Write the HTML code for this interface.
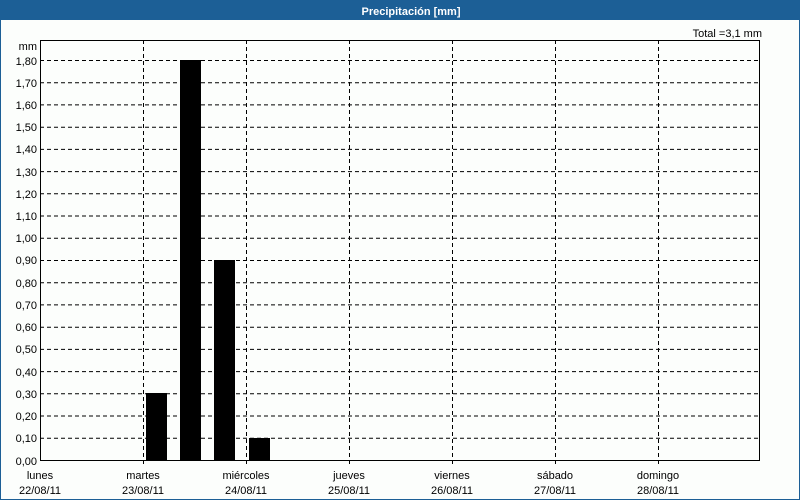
<!DOCTYPE html>
<html><head><meta charset="utf-8"><style>
html,body{margin:0;padding:0;background:#fff;}
svg{display:block;font-family:"Liberation Sans","DejaVu Sans",sans-serif;font-size:11px;}
</style></head><body>
<svg width="800" height="500" xmlns="http://www.w3.org/2000/svg">
<rect x="0" y="0" width="800" height="500" fill="#fcfefc"/>
<rect x="0" y="0" width="800" height="20" fill="#1c5f96"/>
<rect x="0.5" y="0.5" width="799" height="499" fill="none" stroke="#1c5f96"/>
<text x="411" y="15" fill="#fff" font-weight="bold" text-anchor="middle">Precipitación [mm]</text>
<text x="762" y="37" text-anchor="end" fill="#000">Total =3,1 mm</text>
<text x="37" y="50" text-anchor="end">mm</text>
<g stroke="#000" stroke-dasharray="4,3" stroke-width="1">
<line x1="40" x2="760" y1="60.5" y2="60.5"/><line x1="40" x2="760" y1="82.7" y2="82.7"/><line x1="40" x2="760" y1="104.9" y2="104.9"/><line x1="40" x2="760" y1="127.2" y2="127.2"/><line x1="40" x2="760" y1="149.4" y2="149.4"/><line x1="40" x2="760" y1="171.6" y2="171.6"/><line x1="40" x2="760" y1="193.8" y2="193.8"/><line x1="40" x2="760" y1="216" y2="216"/><line x1="40" x2="760" y1="238.3" y2="238.3"/><line x1="40" x2="760" y1="260.5" y2="260.5"/><line x1="40" x2="760" y1="282.7" y2="282.7"/><line x1="40" x2="760" y1="304.9" y2="304.9"/><line x1="40" x2="760" y1="327.2" y2="327.2"/><line x1="40" x2="760" y1="349.4" y2="349.4"/><line x1="40" x2="760" y1="371.6" y2="371.6"/><line x1="40" x2="760" y1="393.8" y2="393.8"/><line x1="40" x2="760" y1="416" y2="416"/><line x1="40" x2="760" y1="438.3" y2="438.3"/>
<line x1="143.5" x2="143.5" y1="40" y2="464"/><line x1="246.5" x2="246.5" y1="40" y2="464"/><line x1="349.5" x2="349.5" y1="40" y2="464"/><line x1="452.5" x2="452.5" y1="40" y2="464"/><line x1="555.5" x2="555.5" y1="40" y2="464"/><line x1="658.5" x2="658.5" y1="40" y2="464"/>
</g>
<g fill="#000">
<rect x="146" y="393" width="21" height="68"/>
<rect x="180" y="60" width="21" height="401"/>
<rect x="214" y="260" width="21" height="201"/>
<rect x="249" y="438" width="21" height="23"/>
</g>
<rect x="40.5" y="40.5" width="719" height="420" fill="none" stroke="#000"/>
<g text-anchor="end" fill="#000">
<text x="37" y="65">1,80</text><text x="37" y="87">1,70</text><text x="37" y="109">1,60</text><text x="37" y="131">1,50</text><text x="37" y="153">1,40</text><text x="37" y="176">1,30</text><text x="37" y="198">1,20</text><text x="37" y="220">1,10</text><text x="37" y="242">1,00</text><text x="37" y="264">0,90</text><text x="37" y="287">0,80</text><text x="37" y="309">0,70</text><text x="37" y="331">0,60</text><text x="37" y="353">0,50</text><text x="37" y="376">0,40</text><text x="37" y="398">0,30</text><text x="37" y="420">0,20</text><text x="37" y="442">0,10</text><text x="37" y="465">0,00</text>
</g>
<g text-anchor="middle" fill="#000">
<text x="40" y="479">lunes</text><text x="40" y="494">22/08/11</text>
<text x="143" y="479">martes</text><text x="143" y="494">23/08/11</text>
<text x="246" y="479">miércoles</text><text x="246" y="494">24/08/11</text>
<text x="349" y="479">jueves</text><text x="349" y="494">25/08/11</text>
<text x="452" y="479">viernes</text><text x="452" y="494">26/08/11</text>
<text x="555" y="479">sábado</text><text x="555" y="494">27/08/11</text>
<text x="658" y="479">domingo</text><text x="658" y="494">28/08/11</text>
</g>
</svg>
</body></html>
